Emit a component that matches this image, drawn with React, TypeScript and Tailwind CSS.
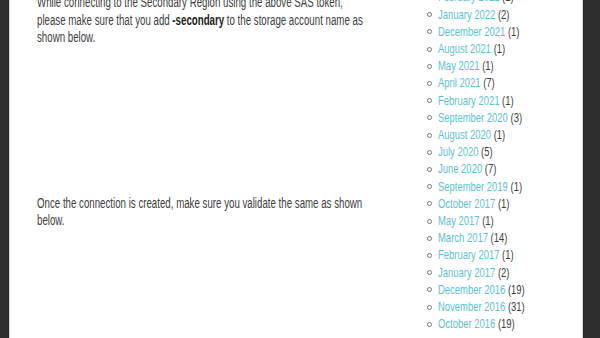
import React from "react";

const archives: [string, number][] = [
  ["February 2022", 1],
  ["January 2022", 2],
  ["December 2021", 1],
  ["August 2021", 1],
  ["May 2021", 1],
  ["April 2021", 7],
  ["February 2021", 1],
  ["September 2020", 3],
  ["August 2020", 1],
  ["July 2020", 5],
  ["June 2020", 7],
  ["September 2019", 1],
  ["October 2017", 1],
  ["May 2017", 1],
  ["March 2017", 14],
  ["February 2017", 1],
  ["January 2017", 2],
  ["December 2016", 19],
  ["November 2016", 31],
  ["October 2016", 19],
];

export default function App() {
  return (
    <div
      className="h-[338px] w-[600px] overflow-hidden bg-[#2d2d2d] flex"
      style={{ fontFamily: "'Liberation Sans', Arial, sans-serif" }}
    >
      <div className="ml-[9px] w-[574px] h-full bg-white border-x border-[#cfcfcf] flex text-[#404040]">
        <main className="w-[370px] shrink-0 pl-[27px] pr-[10px] mt-[-6px] text-[14px] leading-[17.5px] whitespace-nowrap">
          <div className="origin-left scale-x-[0.693]">
            <p>
              While connecting to the Secondary Region using the above SAS token,
              <br />
              please make sure that you add <strong className="font-bold text-[#222]">-secondary</strong> to the
              storage account name as
              <br />
              shown below.
            </p>
            <div className="h-[148px]" />
            <p>
              Once the connection is created, make sure you validate the same as shown
              <br />
              below.
            </p>
          </div>
        </main>
        <aside className="pl-[47px] mt-[-11.6px] text-[13.5px] leading-[17.2px]">
          <ul>
            {archives.map(([m, c]) => (
              <li key={m} className="flex items-center gap-[6px] whitespace-nowrap">
                <span className="w-[5px] h-[5px] shrink-0 rounded-full border border-[#777] mt-[1px]" />
                <span className="origin-left scale-x-[0.7]">
                  <a className="text-[#5dc2cf]">{m}</a>{" "}
                  <span className="text-[#404040]">({c})</span>
                </span>
              </li>
            ))}
          </ul>
        </aside>
      </div>
    </div>
  );
}
